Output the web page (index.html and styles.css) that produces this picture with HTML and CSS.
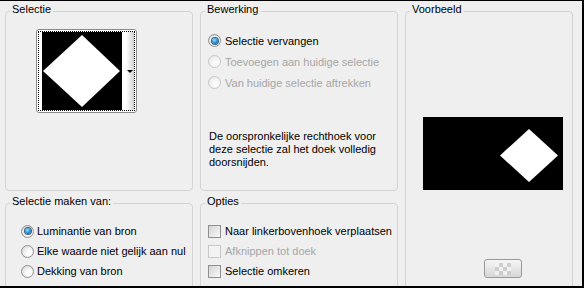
FILE: index.html
```html
<!DOCTYPE html>
<html lang="nl">
<head>
    <meta charset="UTF-8">
    <title>Selectie uit masker</title>
    <link rel="stylesheet" href="styles.css">
</head>
<body>
    <div class="dialog">
        <fieldset class="group">
            <legend>Selectie</legend>
            <div class="picker">
                <div class="picker-focus">
                    <div class="picker-img">
                        <svg width="80" height="78" viewBox="0 0 80 78">
                            <rect width="80" height="78" fill="#000"/>
                            <polygon points="40,3 78,39 40,75 1,39" fill="#fff"/>
                        </svg>
                    </div>
                    <div class="picker-drop"><span class="arrow"></span></div>
                </div>
            </div>
        </fieldset>

        <fieldset class="group">
            <legend>Bewerking</legend>
            <div class="opts wide">
                <label class="opt"><span class="radio checked"></span>Selectie vervangen</label>
                <label class="opt disabled"><span class="radio"></span>Toevoegen aan huidige selectie</label>
                <label class="opt disabled"><span class="radio"></span>Van huidige selectie aftrekken</label>
            </div>
            <p class="note">De oorspronkelijke rechthoek voor<br>deze selectie zal het doek volledig<br>doorsnijden.</p>
        </fieldset>

        <fieldset class="group preview-group">
            <legend>Voorbeeld</legend>
            <div class="preview">
                <svg width="140" height="73" viewBox="0 0 140 73">
                    <rect width="140" height="73" fill="#000"/>
                    <polygon points="106,12 135,38.5 106,65 77,38.5" fill="#fff"/>
                </svg>
            </div>
            <button class="zoom-btn" type="button"><span class="checker"></span></button>
        </fieldset>

        <fieldset class="group">
            <legend>Selectie maken van:</legend>
            <div class="opts narrow">
                <label class="opt"><span class="radio checked"></span>Luminantie van bron</label>
                <label class="opt"><span class="radio"></span>Elke waarde niet gelijk aan nul</label>
                <label class="opt"><span class="radio"></span>Dekking van bron</label>
            </div>
        </fieldset>

        <fieldset class="group">
            <legend>Opties</legend>
            <div class="opts narrow boxes">
                <label class="opt"><span class="check"></span>Naar linkerbovenhoek verplaatsen</label>
                <label class="opt disabled"><span class="check"></span>Afknippen tot doek</label>
                <label class="opt"><span class="check"></span>Selectie omkeren</label>
            </div>
        </fieldset>
    </div>
</body>
</html>
```

FILE: styles.css
```css
body {
    margin: 0;
    background: #000;
    font-family: "Liberation Sans", Arial, sans-serif;
    font-size: 11px;
    color: #000;
}

.dialog {
    width: 582px;
    height: 285px;
    margin-top: 1px;
    background: #efefef;
    overflow: hidden;
    box-sizing: border-box;
    padding: 2px 0 0 5px;
    display: grid;
    grid-template-columns: 188px 198px 168px;
    grid-template-rows: 188px 120px;
    column-gap: 7px;
    row-gap: 4px;
}

/* Groepsvakken */
.group {
    margin: 0;
    padding: 0;
    min-width: 0;
    border: 1px solid #d3d3d3;
    border-radius: 4px;
}

.group legend {
    margin-left: 4px;
    padding: 0 2px 4px 2px;
    line-height: 13px;
}

.preview-group {
    grid-column: 3;
    grid-row: 1 / span 2;
}

/* Keuzelijst met miniatuur */
.picker {
    width: 101px;
    height: 84px;
    box-sizing: border-box;
    margin: 9px 0 0 30px;
    border: 1px solid #8b8b8b;
    border-radius: 3px;
    padding: 1px;
    background: #fff;
}

.picker-focus {
    display: flex;
    height: 100%;
    box-sizing: border-box;
    border: 1px dotted #000;
    padding-left: 3px;
}

.picker-img svg {
    display: block;
}

.picker-drop {
    width: 12px;
    display: flex;
    align-items: center;
    justify-content: center;
    padding-left: 3px;
    box-sizing: border-box;
    background: linear-gradient(to right, #fff 35%, #d2d2d2);
}

.arrow {
    width: 0;
    height: 0;
    border-left: 3px solid transparent;
    border-right: 3px solid transparent;
    border-top: 3px solid #000;
}

/* Keuzerondjes en vakjes */
.opts {
    display: flex;
    flex-direction: column;
}

.opts.wide {
    margin: 10px 0 0 7px;
}

.opts.wide .opt {
    height: 21px;
}

.opts.narrow {
    margin: 9px 0 0 15px;
}

.opts.boxes {
    margin-left: 7px;
}

.opt {
    display: flex;
    align-items: center;
    height: 20px;
    gap: 3px;
    white-space: nowrap;
}

.opts.wide .opt,
.opts.boxes .opt {
    gap: 4px;
}

.opt.disabled {
    color: #a6a6a6;
}

.radio {
    flex-shrink: 0;
    width: 13px;
    height: 13px;
    box-sizing: border-box;
    border-radius: 50%;
    border: 1px solid #8f8f8f;
    background: radial-gradient(circle at 65% 65%, #fff 20%, #d6d6d6 90%);
    display: flex;
    align-items: center;
    justify-content: center;
}

.radio.checked::after {
    content: "";
    width: 6px;
    height: 6px;
    border-radius: 50%;
    background: radial-gradient(circle at 40% 35%, #9be0ff 0%, #2a8fd0 50%, #0b4f80 100%);
    box-shadow: 0 0 0 1px #33607f;
}

.opt.disabled .radio {
    border-color: #c8c8c8;
    background: radial-gradient(circle at 65% 65%, #fbfbfb 20%, #e6e6e6 90%);
}

.check {
    flex-shrink: 0;
    width: 13px;
    height: 13px;
    box-sizing: border-box;
    border: 1px solid #8f8f8f;
    background: linear-gradient(135deg, #d4d4d4, #f8f8f8);
}

.opt.disabled .check {
    border-color: #c8c8c8;
    background: #f3f3f3;
}

.note {
    margin: 37px 0 0 8px;
    line-height: 13px;
}

/* Voorbeeld */
.preview {
    margin: 97px 0 0 17px;
}

.preview svg {
    display: block;
}

.zoom-btn {
    display: flex;
    align-items: center;
    justify-content: center;
    width: 38px;
    height: 19px;
    margin: 69px 0 0 78px;
    padding: 0;
    border: 1px solid #9a9a9a;
    border-radius: 3px;
    background: linear-gradient(#f6f6f6, #d6d6d6);
}

.checker {
    width: 16px;
    height: 12px;
    background: repeating-conic-gradient(#c8c8c8 0 25%, #f4f4f4 0 50%) 0 0 / 8px 8px;
    opacity: 0.8;
}
```
